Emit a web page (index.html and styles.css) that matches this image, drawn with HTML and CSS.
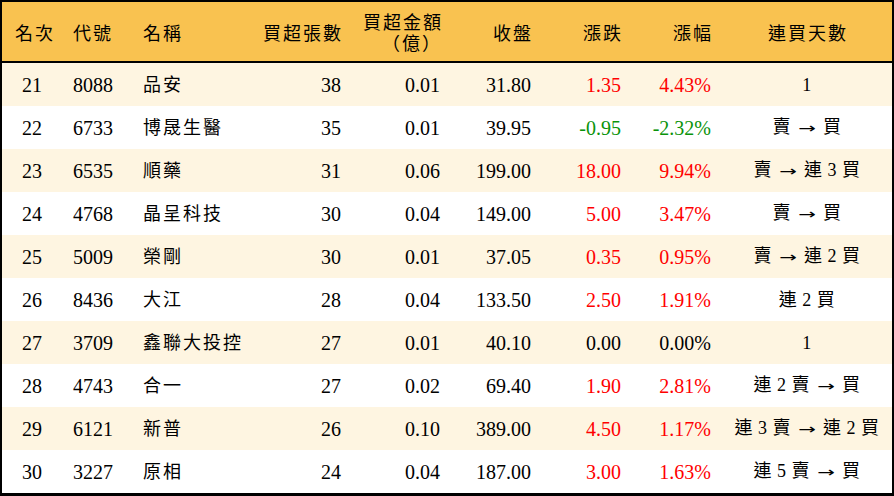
FILE: index.html
```html
<!DOCTYPE html>
<html lang="zh-Hant">
<head>
<meta charset="utf-8">
<title>買超排行</title>
<link rel="stylesheet" href="styles.css">
</head>
<body>
<div class="board">
<table class="rank">
<colgroup>
<col class="c1"><col class="c2"><col class="c3"><col class="c4"><col class="c5"><col class="c6"><col class="c7"><col class="c8"><col class="c9">
</colgroup>
<thead>
<tr>
<th class="ctr">名次</th>
<th class="lft">代號</th>
<th class="lft">名稱</th>
<th class="rgt">買超張數</th>
<th class="rgt two">買超金額<br>（億）</th>
<th class="rgt">收盤</th>
<th class="rgt">漲跌</th>
<th class="rgt">漲幅</th>
<th class="ctr">連買天數</th>
</tr>
</thead>
<tbody>
<tr class="alt"><td class="ctr">21</td><td class="lft">8088</td><td class="lft cjk">品安</td><td class="rgt">38</td><td class="rgt">0.01</td><td class="rgt">31.80</td><td class="rgt up">1.35</td><td class="rgt up">4.43%</td><td class="ctr days">1</td></tr>
<tr><td class="ctr">22</td><td class="lft">6733</td><td class="lft cjk">博晟生醫</td><td class="rgt">35</td><td class="rgt">0.01</td><td class="rgt">39.95</td><td class="rgt down">-0.95</td><td class="rgt down">-2.32%</td><td class="ctr days">賣 <span class="arw">→</span> 買</td></tr>
<tr class="alt"><td class="ctr">23</td><td class="lft">6535</td><td class="lft cjk">順藥</td><td class="rgt">31</td><td class="rgt">0.06</td><td class="rgt">199.00</td><td class="rgt up">18.00</td><td class="rgt up">9.94%</td><td class="ctr days">賣 <span class="arw">→</span> 連 3 買</td></tr>
<tr><td class="ctr">24</td><td class="lft">4768</td><td class="lft cjk">晶呈科技</td><td class="rgt">30</td><td class="rgt">0.04</td><td class="rgt">149.00</td><td class="rgt up">5.00</td><td class="rgt up">3.47%</td><td class="ctr days">賣 <span class="arw">→</span> 買</td></tr>
<tr class="alt"><td class="ctr">25</td><td class="lft">5009</td><td class="lft cjk">榮剛</td><td class="rgt">30</td><td class="rgt">0.01</td><td class="rgt">37.05</td><td class="rgt up">0.35</td><td class="rgt up">0.95%</td><td class="ctr days">賣 <span class="arw">→</span> 連 2 買</td></tr>
<tr><td class="ctr">26</td><td class="lft">8436</td><td class="lft cjk">大江</td><td class="rgt">28</td><td class="rgt">0.04</td><td class="rgt">133.50</td><td class="rgt up">2.50</td><td class="rgt up">1.91%</td><td class="ctr days">連 2 買</td></tr>
<tr class="alt"><td class="ctr">27</td><td class="lft">3709</td><td class="lft cjk">鑫聯大投控</td><td class="rgt">27</td><td class="rgt">0.01</td><td class="rgt">40.10</td><td class="rgt">0.00</td><td class="rgt">0.00%</td><td class="ctr days">1</td></tr>
<tr><td class="ctr">28</td><td class="lft">4743</td><td class="lft cjk">合一</td><td class="rgt">27</td><td class="rgt">0.02</td><td class="rgt">69.40</td><td class="rgt up">1.90</td><td class="rgt up">2.81%</td><td class="ctr days">連 2 賣 <span class="arw">→</span> 買</td></tr>
<tr class="alt"><td class="ctr">29</td><td class="lft">6121</td><td class="lft cjk">新普</td><td class="rgt">26</td><td class="rgt">0.10</td><td class="rgt">389.00</td><td class="rgt up">4.50</td><td class="rgt up">1.17%</td><td class="ctr days">連 3 賣 <span class="arw">→</span> 連 2 買</td></tr>
<tr><td class="ctr">30</td><td class="lft">3227</td><td class="lft cjk">原相</td><td class="rgt">24</td><td class="rgt">0.04</td><td class="rgt">187.00</td><td class="rgt up">3.00</td><td class="rgt up">1.63%</td><td class="ctr days">連 5 賣 <span class="arw">→</span> 買</td></tr>
</tbody>
</table>
</div>
</body>
</html>
```
FILE: styles.css
```css
html, body {
  margin: 0;
  padding: 0;
  background: #ffffff;
}
.board {
  width: 894px;
  height: 496px;
  box-sizing: border-box;
  border: 2px solid #000;
  border-bottom-width: 3px;
  overflow: hidden;
}
.rank {
  width: 890px;
  border-collapse: collapse;
  table-layout: fixed;
  font-family: "Liberation Serif", "Noto Sans CJK TC", serif;
  font-size: 20px;
  color: #000;
}
.c1 { width: 60px; }
.c2 { width: 70px; }
.c3 { width: 118px; }
.c4 { width: 102px; }
.c5 { width: 99px; }
.c6 { width: 91px; }
.c7 { width: 90px; }
.c8 { width: 90px; }
.c9 { width: 170px; }
.rank th {
  height: 59px;
  padding: 0 11px;
  background: #f9c250;
  border-bottom: 2px solid #000;
  font-family: "Noto Sans CJK TC", sans-serif;
  font-weight: normal;
  font-size: 18px;
  letter-spacing: 2px;
  line-height: 20px;
  vertical-align: middle;
  white-space: nowrap;
}
.rank th.rgt { padding-right: 9px; }
.rank th.ctr { padding-left: 13px; }
.rank th.two { line-height: 21px; }
.rank td {
  height: 43px;
  padding: 0 11px;
  vertical-align: middle;
  white-space: nowrap;
  line-height: 24px;
}
.rank tbody tr { background: #ffffff; }
.rank tbody tr.alt { background: #fef5e1; }
.rank td.cjk {
  font-size: 18px;
  letter-spacing: 2px;
}
.rank td.days {
  padding: 0 4px;
  font-size: 18px;
  letter-spacing: 0.5px;
}
.arw {
  display: inline-block;
  width: 22px;
  font-family: "DejaVu Sans", sans-serif;
  font-size: 14px;
  transform: scaleX(1.5);
  text-align: center;
  letter-spacing: 0;
}
.ctr { text-align: center; }
.lft { text-align: left; }
.rgt { text-align: right; }
.up { color: #ff0000; }
.down { color: #0a930a; }
```
